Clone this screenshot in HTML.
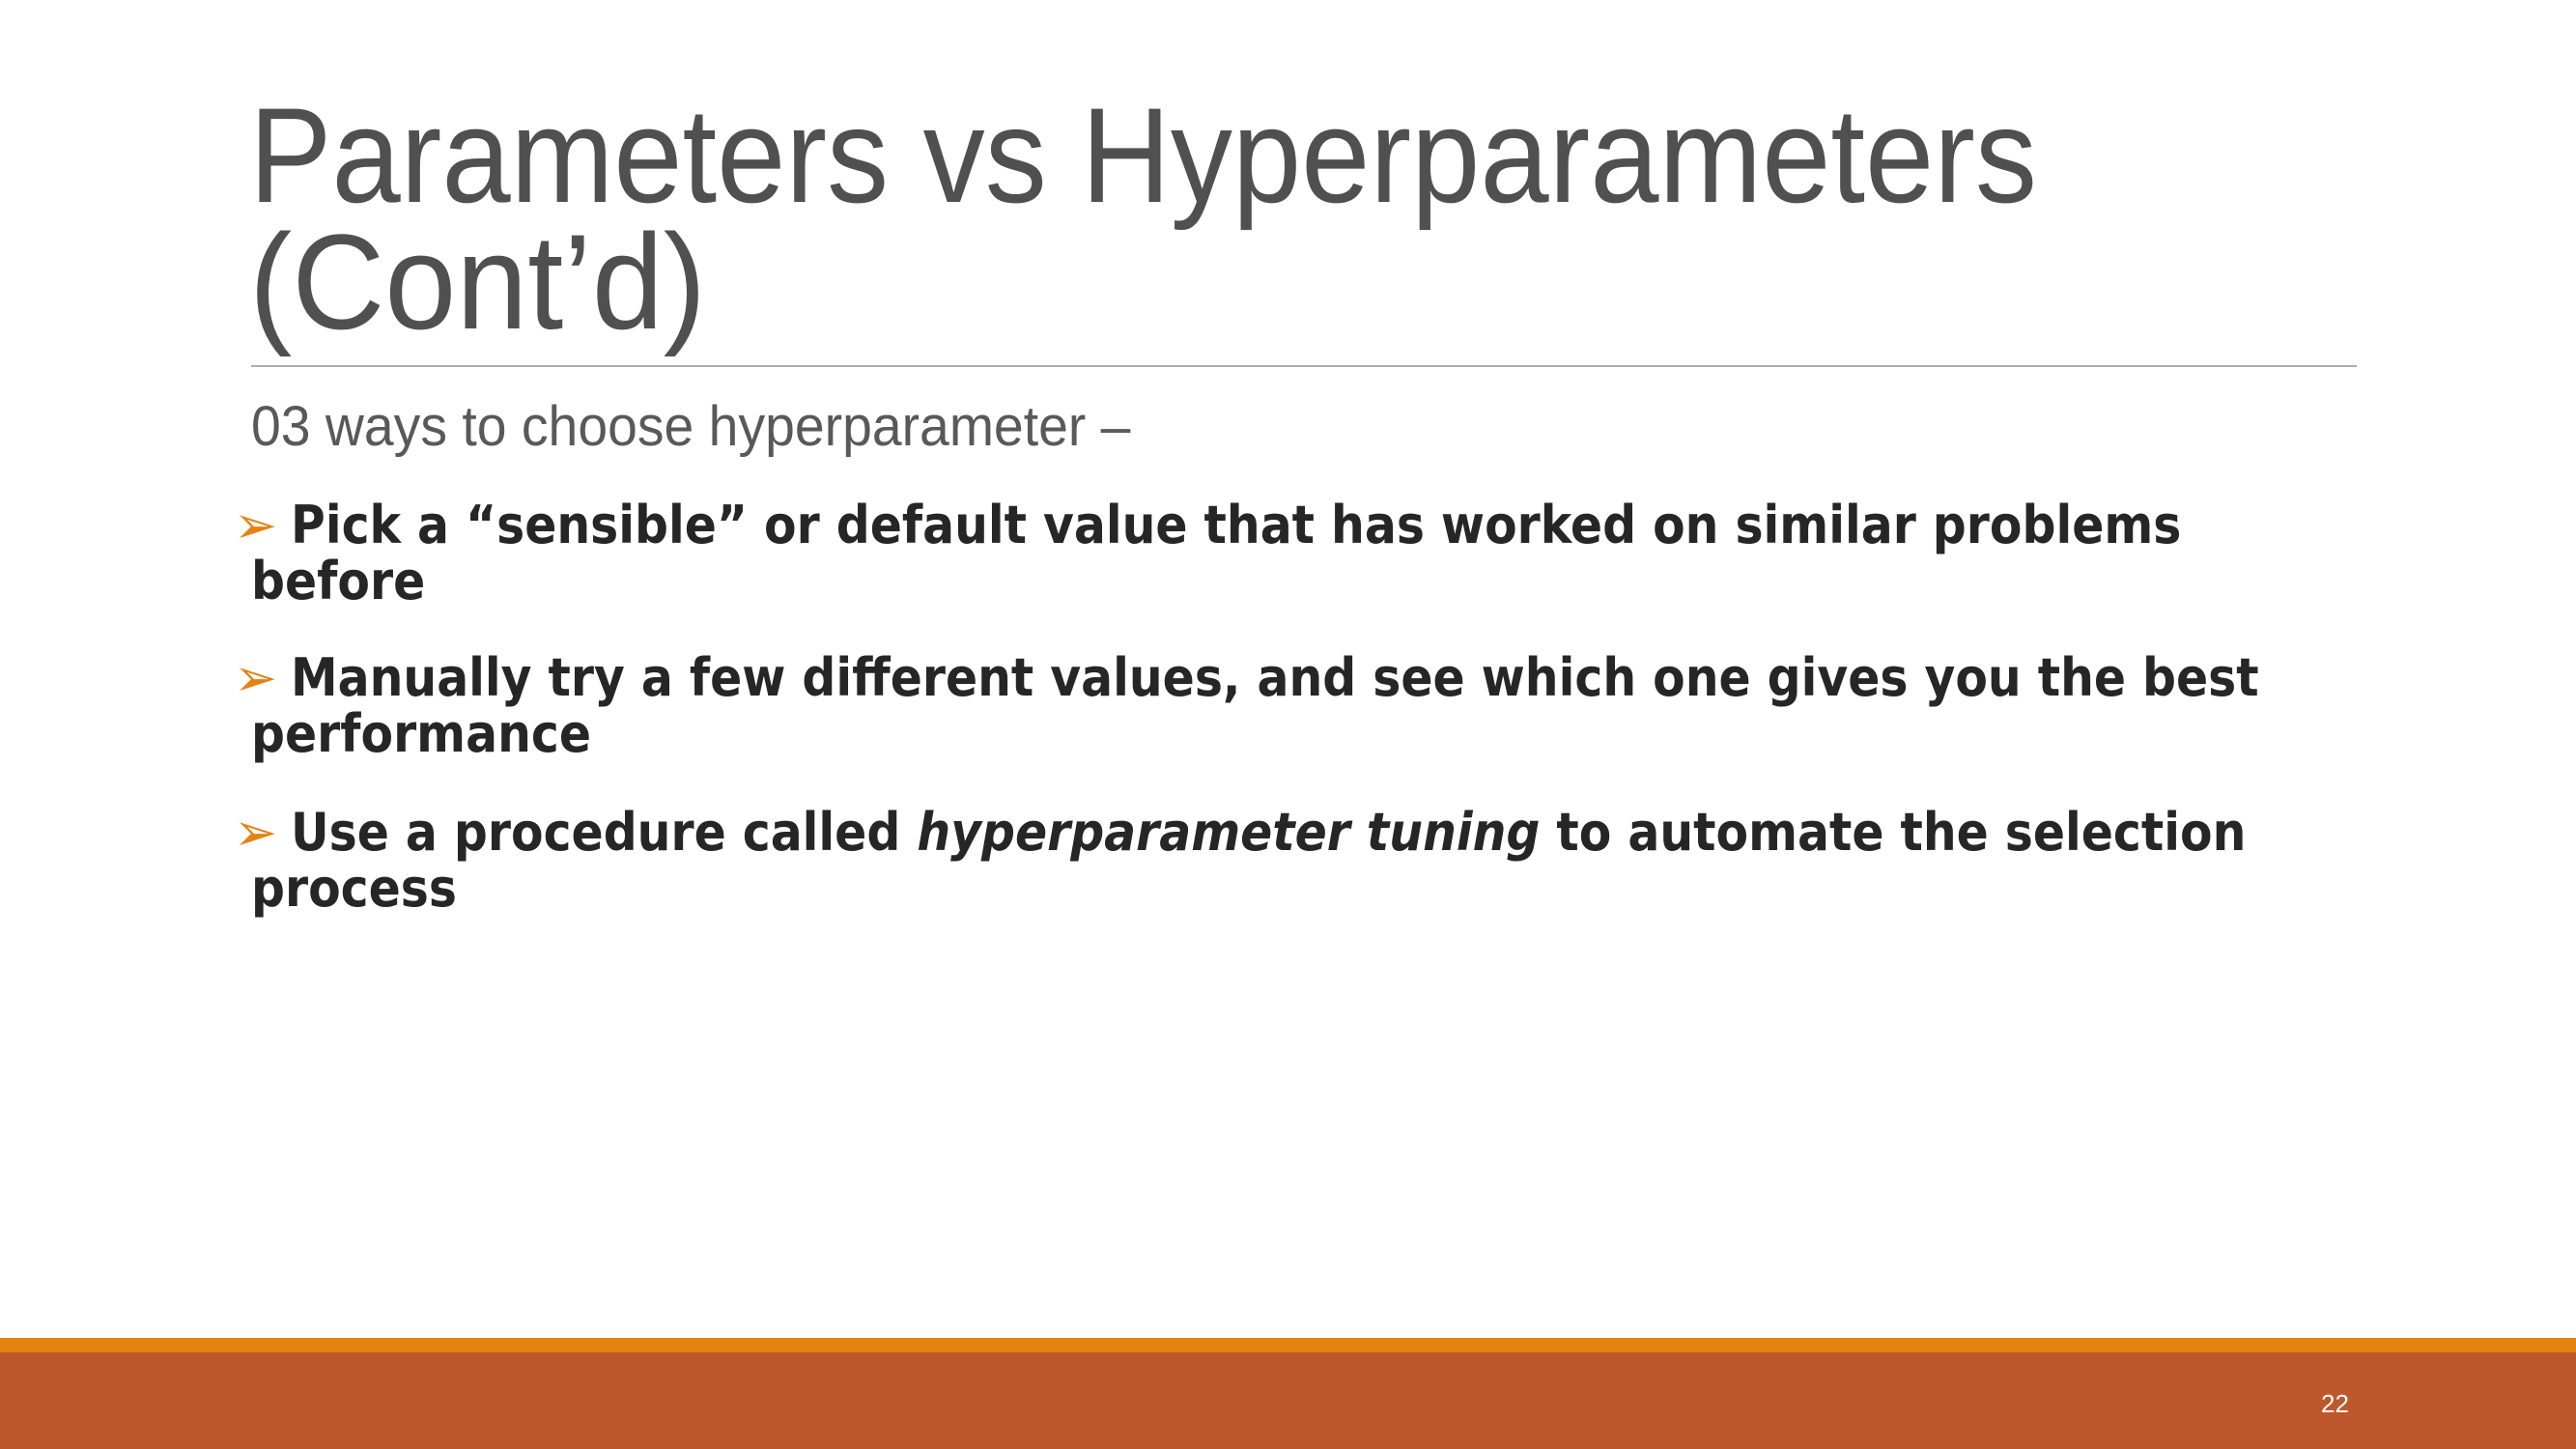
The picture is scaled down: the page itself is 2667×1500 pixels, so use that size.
<!DOCTYPE html>
<html><head><meta charset="utf-8"><style>
html,body{margin:0;padding:0}
body{width:2667px;height:1500px;position:relative;overflow:hidden;background:#fff}
.l{position:absolute;white-space:nowrap;line-height:1;transform-origin:0 50%}
.t{font-family:"Liberation Sans",sans-serif;font-size:140px;color:#505050;left:258px;transform:scaleX(0.915)}
.s{font-family:"Liberation Sans",sans-serif;font-size:58px;color:#595959;left:260px;transform:scaleX(0.954)}
.b{font-family:"DejaVu Sans",sans-serif;font-weight:bold;font-size:54px;color:#262626;transform:scaleX(0.905)}
.ar{position:absolute;color:#e48312;font-family:"DejaVu Sans",sans-serif;font-size:54px;line-height:1;left:242px}
</style></head><body>
<div class="l t" style="top:91px">Parameters vs Hyperparameters</div>
<div class="l t" style="top:222px;transform:scaleX(0.95)">(Cont’d)</div>
<div style="position:absolute;left:260px;top:378px;width:2180px;height:2px;background:#acacac"></div>
<div class="l s" style="top:413px">03 ways to choose hyperparameter –</div>

<div class="ar" style="top:517px">➢</div>
<div class="l b" style="left:301px;top:517px">Pick a “sensible” or default value that has worked on similar problems</div>
<div class="l b" style="left:260px;top:575px">before</div>

<div class="ar" style="top:675px">➢</div>
<div class="l b" style="left:301px;top:675px">Manually try a few different values, and see which one gives you the best</div>
<div class="l b" style="left:260px;top:733px">performance</div>

<div class="ar" style="top:835px">➢</div>
<div class="l b" style="left:301px;top:835px">Use a procedure called <i>hyperparameter tuning</i> to automate the selection</div>
<div class="l b" style="left:260px;top:893px">process</div>

<div style="position:absolute;left:0;top:1385px;width:2667px;height:15px;background:#e48312"></div>
<div style="position:absolute;left:0;top:1400px;width:2667px;height:100px;background:#be582c"></div>
<div class="l" style="left:2403px;top:1440px;font-family:'Liberation Sans',sans-serif;font-size:26px;color:#fff">22</div>
</body></html>
